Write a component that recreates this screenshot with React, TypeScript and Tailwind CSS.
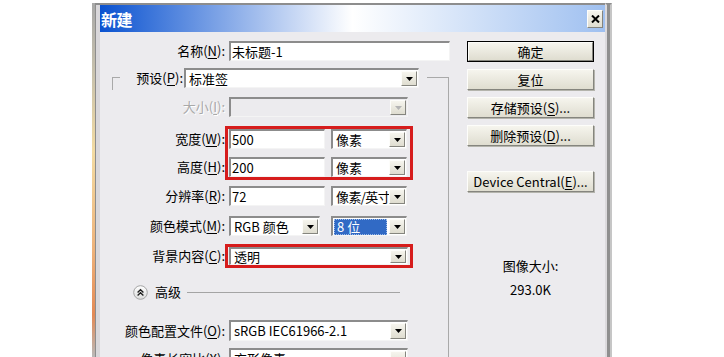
import type { ReactNode } from 'react'

const sunken =
  'border-t-2 border-l-2 border-r border-b border-t-[#8c8c8c] border-l-[#8c8c8c] border-r-[#f4f4f4] border-b-[#f4f4f4]'

const raised =
  'border border-t-[#fdfdfa] border-l-[#fdfdfa] border-r-[#85857e] border-b-[#85857e] bg-linear-to-b from-[#f6f5ee] to-[#dfddd0]'

function Mn({ children }: { children: ReactNode }) {
  return <span className="underline underline-offset-[2px]">{children}</span>
}

function Arrow({ disabled = false }: { disabled?: boolean }) {
  return (
    <div className={`my-px mr-px flex w-[16px] shrink-0 items-center justify-center ${raised}`}>
      <svg width="7" height="4" viewBox="0 0 7 4">
        <polygon points="0,0 7,0 3.5,4" fill={disabled ? '#b4b4b4' : '#000'} />
      </svg>
    </div>
  )
}

function TextBox({ value, className }: { value: string; className: string }) {
  return (
    <div className={`flex items-center bg-white pl-px text-[13px] leading-[16px] ${sunken} ${className}`}>
      {value}
    </div>
  )
}

function Select({
  value,
  className,
  disabled = false,
  selected = false,
}: {
  value: string
  className: string
  disabled?: boolean
  selected?: boolean
}) {
  return (
    <div className={`flex ${disabled ? 'bg-[#ecebee]' : 'bg-white'} ${sunken} ${className}`}>
      <div className="flex min-w-0 flex-1 items-center whitespace-nowrap pl-[3px] text-[13px] leading-[14px]">
        {selected ? (
          <div className="-ml-[2px] mr-[2px] flex h-[16px] flex-1 items-center border border-dotted border-[#9fbce8] bg-[#316ac5] pl-[2px] text-white">
            {value}
          </div>
        ) : (
          value
        )}
      </div>
      <Arrow disabled={disabled} />
    </div>
  )
}

function Label({ children, disabled = false }: { children: ReactNode; disabled?: boolean }) {
  return (
    <div
      className={`flex w-[125px] shrink-0 items-center justify-end whitespace-nowrap text-[13px] leading-[16px] ${
        disabled ? 'text-[#a9a9a9] [text-shadow:1px_1px_0_#fff]' : 'text-black'
      }`}
    >
      {children}
    </div>
  )
}

function Button({ children, primary = false }: { children: ReactNode; primary?: boolean }) {
  if (primary) {
    return (
      <div className="h-[21px] w-[127px] border border-black">
        <div className={`flex h-full items-center justify-center text-[13px] leading-[16px] ${raised}`}>
          {children}
        </div>
      </div>
    )
  }
  return (
    <div
      className={`flex h-[21px] w-[127px] items-center justify-center text-[13px] leading-[16px] shadow-[1px_1px_0_#b4b4ac] ${raised}`}
    >
      {children}
    </div>
  )
}

export default function App() {
  return (
    <div className="h-[357px] w-[724px] overflow-hidden bg-white font-['Noto_Sans_CJK_SC',sans-serif] text-black">
      <div className="ml-[92px] mt-[3px] flex h-[354px]">
        <div className="w-[3px] bg-[linear-gradient(to_bottom,#a8a8a8,#c9c2ad_20%,#f3dba2_42%,#eeb27a_70%,#e48a55_88%,#b9b9b9)]" />
        <div className="w-[5px] border-l border-t-2 border-[#8d8d8d] bg-[#d9d7da]" />
        <div className="flex w-[505px] flex-col border-t-2 border-[#8d8d8d]">
          {/* title bar */}
          <div className="flex h-[27px] shrink-0 items-center justify-between bg-linear-to-r from-[#0a52d0] via-[#2a6fdc_55%] to-[#9fc0f0] pl-px pr-[2px]">
            <span className="text-[16px] font-bold leading-[18px] tracking-[-0.5px] text-white">新建</span>
            <div className={`flex h-[18px] w-[16px] items-center justify-center ${raised}`}>
              <svg width="9" height="8" viewBox="0 0 9 8">
                <path d="M1 0.5 L8 7.5 M8 0.5 L1 7.5" stroke="#000" strokeWidth="2" />
              </svg>
            </div>
          </div>

          {/* body */}
          <div className="flex flex-1 bg-[#ecebee] pt-[9px]">
            <div className="flex w-[351px] shrink-0 flex-col">
              <div className="flex h-[20px]">
                <Label>
                  名称(<Mn>N</Mn>):
                </Label>
                <TextBox value="未标题-1" className="ml-[4px] w-[221px]" />
              </div>

              <div className="mr-[2px] mt-[16px] flex flex-1 flex-col border-r border-[#a9a9a9]">
                {/* preset row sitting on the group's top edge */}
                <div className="-mt-[9px] flex h-[20px]">
                  <div className="ml-[12px] mt-[9px] h-[13px] w-[8px] self-start border-l border-t border-[#a9a9a9]" />
                  <div className="ml-[13px] flex w-[50px] items-center justify-end whitespace-nowrap text-[13px] leading-[16px]">
                    预设(<Mn>P</Mn>):
                  </div>
                  <Select value="标准签" className="ml-px w-[235px]" />
                  <div className="ml-[8px] mt-[9px] h-px flex-1 self-start bg-[#a9a9a9]" />
                </div>

                <div className="mt-[9px] flex h-[20px]">
                  <Label disabled>
                    大小(<Mn>I</Mn>):
                  </Label>
                  <Select value="" disabled className="ml-[4px] w-[179px]" />
                </div>

                {/* width / height with red marker */}
                <div className="mt-[9px] flex">
                  <div className="flex w-[125px] shrink-0 flex-col gap-[8px] pt-[3px]">
                    <div className="flex h-[20px]">
                      <Label>
                        宽度(<Mn>W</Mn>):
                      </Label>
                    </div>
                    <div className="flex h-[20px]">
                      <Label>
                        高度(<Mn>H</Mn>):
                      </Label>
                    </div>
                  </div>
                  <div className="flex flex-col gap-[8px] border-[3px] border-[#d61c1c] pl-px pr-[3px]">
                    <div className="flex h-[20px] gap-[6px]">
                      <TextBox value="500" className="w-[96px]" />
                      <Select value="像素" className="w-[76px]" />
                    </div>
                    <div className="flex h-[20px] gap-[6px]">
                      <TextBox value="200" className="w-[96px]" />
                      <Select value="像素" className="w-[76px]" />
                    </div>
                  </div>
                </div>

                <div className="mt-[6px] flex h-[20px]">
                  <Label>
                    分辨率(<Mn>R</Mn>):
                  </Label>
                  <TextBox value="72" className="ml-[4px] w-[96px]" />
                  <Select value="像素/英寸" className="ml-[6px] w-[76px] tracking-[-0.6px]" />
                </div>

                <div className="mt-[10px] flex h-[20px]">
                  <Label>
                    颜色模式(<Mn>M</Mn>):
                  </Label>
                  <Select value="RGB 颜色" className="ml-[4px] w-[91px]" />
                  <Select value="8 位" selected className="ml-[11px] w-[76px]" />
                </div>

                <div className="mt-[10px] flex h-[20px]">
                  <Label>
                    背景内容(<Mn>C</Mn>):
                  </Label>
                  <div className="-my-[2px] border-[3px] border-[#d61c1c] pl-px pr-[2px]">
                    <Select value="透明" className="h-[18px] w-[179px]" />
                  </div>
                </div>

                <div className="mt-[18px] flex h-[16px] items-center">
                  <svg className="ml-[33px] shrink-0" width="15" height="15" viewBox="0 0 15 15">
                    <defs>
                      <linearGradient id="adv" x1="0" y1="0" x2="0" y2="1">
                        <stop offset="0" stopColor="#ffffff" />
                        <stop offset="1" stopColor="#dcdcdc" />
                      </linearGradient>
                    </defs>
                    <circle cx="7.5" cy="7.5" r="6.8" fill="url(#adv)" stroke="#a4a4a4" strokeWidth="1" />
                    <path
                      d="M4.6 7.4 L7.5 4.8 L10.4 7.4 M4.6 10.4 L7.5 7.8 L10.4 10.4"
                      fill="none"
                      stroke="#202020"
                      strokeWidth="1.4"
                    />
                  </svg>
                  <span className="ml-[7px] text-[13px] leading-[16px]">高级</span>
                  <div className="ml-[6px] mr-[48px] h-px flex-1 bg-[#a4a4a4]" />
                </div>

                <div className="mt-[20px] flex h-[21px]">
                  <Label>
                    颜色配置文件(<Mn>O</Mn>):
                  </Label>
                  <Select value="sRGB IEC61966-2.1" className="ml-[4px] w-[179px]" />
                </div>

                <div className="mt-[7px] flex h-[21px]">
                  <Label>
                    像素长宽比(<Mn>X</Mn>):
                  </Label>
                  <Select value="方形像素" className="ml-[4px] w-[179px]" />
                </div>
              </div>
            </div>

            {/* right column */}
            <div className="flex flex-1 flex-col pl-[16px]">
              <Button primary>确定</Button>
              <div className="mt-[7px]">
                <Button>复位</Button>
              </div>
              <div className="mt-[7px]">
                <Button>
                  存储预设(<Mn>S</Mn>)...
                </Button>
              </div>
              <div className="mt-[7px]">
                <Button>
                  删除预设(<Mn>D</Mn>)...
                </Button>
              </div>
              <div className="mt-[25px]">
                <Button>
                  Device Central(<Mn>E</Mn>)...
                </Button>
              </div>
              <div className="mt-[66px] w-[127px] text-center text-[13px] leading-[16px]">图像大小:</div>
              <div className="mt-[8px] w-[127px] text-center text-[13px] leading-[16px]">293.0K</div>
            </div>
          </div>
        </div>
        <div className="w-[7px] border-l-2 border-r-2 border-t-2 border-l-[#dcdadd] border-r-[#c6c6c6] border-t-[#8d8d8d] bg-[#8f8f8f]" />
      </div>
    </div>
  )
}
